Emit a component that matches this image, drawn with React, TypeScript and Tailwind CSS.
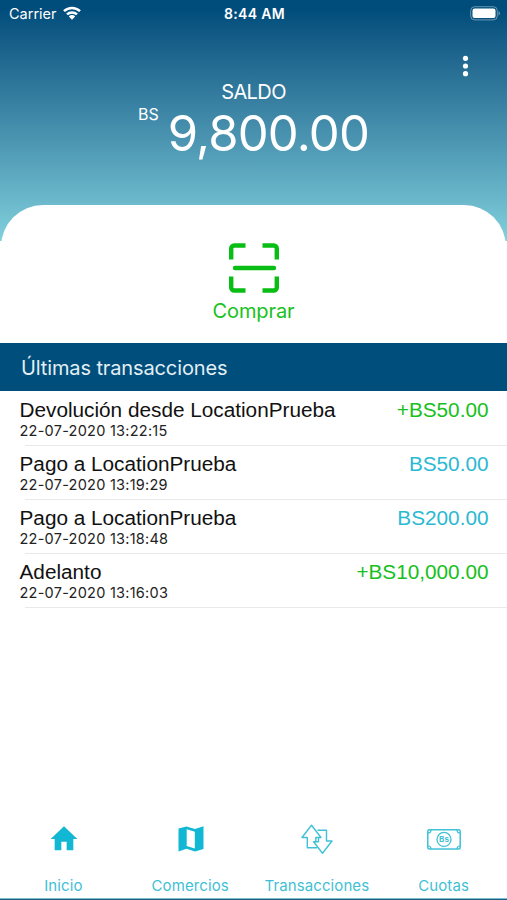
import { MdHome } from 'react-icons/md';

const transactions = [
  { title: 'Devolución desde LocationPrueba', date: '22-07-2020 13:22:15', amount: '+BS50.00', credit: true },
  { title: 'Pago a LocationPrueba', date: '22-07-2020 13:19:29', amount: 'BS50.00', credit: false },
  { title: 'Pago a LocationPrueba', date: '22-07-2020 13:18:48', amount: 'BS200.00', credit: false },
  { title: 'Adelanto', date: '22-07-2020 13:16:03', amount: '+BS10,000.00', credit: true },
];

function ScanIcon() {
  return (
    <svg width="50" height="50" viewBox="0 0 50 50" fill="none" stroke="#08bd13" strokeWidth="4.4" strokeLinejoin="round">
      <path d="M2.200 16.500V5.500a3 3 0 0 1 3-3H16.500M33.500 2.500h11.300a3 3 0 0 1 3 3V16.500M47.800 33.500v11a3 3 0 0 1-3 3H33.500M16.500 47.500H5.200a3 3 0 0 1-3-3V33.500" />
      <path d="M6 25h39" strokeLinecap="round" />
    </svg>
  );
}

function MapIcon() {
  return (
    <svg width="26" height="26" viewBox="0 0 26 26" fill="currentColor" fillRule="evenodd">
      <path d="M0.500 2.500 8.500 0.500 17 3 25.500 0.200V23L17 25.500 8.500 22.800 0.500 25.500zM8.700 3.300V20L16.800 22.500V5.800z" />
    </svg>
  );
}

function TransferIcon() {
  return (
    <svg width="32" height="30" viewBox="0 0 32 30" fill="none" stroke="#3fc1d6" strokeWidth="1.4" strokeLinejoin="round">
      <path d="M16 23.800H6.300V13.500H1L10.500 1.200 20 13.500H14.800V17.800" />
      <path d="M16.500 6.200h9V17H31L21.500 29.200 12.600 17.800H17.500V13.500" />
    </svg>
  );
}

function BillIcon() {
  return (
    <svg width="34" height="21" viewBox="0 0 34 21" fill="none" stroke="#3fc1d6" strokeWidth="1.5">
      <rect x="0.800" y="0.800" width="32.400" height="19.200" rx="1.500" />
      <path d="M1 4Q4 4 4 1M30 1Q30 4 33 4M33 17Q30 17 30 20M4 20Q4 17 1 17" strokeWidth="1.2" />
      <circle cx="17" cy="10.400" r="7" strokeWidth="1.300" />
      <text x="17" y="13.300" textAnchor="middle" fontSize="8" fontWeight="700" fill="#3fc1d6" stroke="none">Bs</text>
    </svg>
  );
}

const tabs = [
  { label: 'Inicio', icon: <MdHome className="h-[34px] w-8" preserveAspectRatio="none" /> },
  { label: 'Comercios', icon: <MapIcon /> },
  { label: 'Transacciones', icon: <TransferIcon /> },
  { label: 'Cuotas', icon: <BillIcon /> },
];

export default function App() {
  return (
    <div className="flex h-[900px] w-[507px] flex-col overflow-hidden bg-white font-['Inter',sans-serif]">
      {/* Header */}
      <header className="relative h-[241px] shrink-0 bg-linear-to-b from-[#004d7b] from-4% to-[#80d0dc] text-white">
        <div className="grid h-7 grid-cols-3 items-center pl-[9px] pr-[7px]">
          <div className="flex items-center gap-[6px] text-[14.500px]">
            <span>Carrier</span>
            <svg className="-mt-0.5" width="18" height="14" viewBox="0 0 18 14" fill="none" stroke="white" strokeWidth="2.500">
              <path d="M1 5.200a11.500 11.500 0 0 1 16 0M4 8.400a7.200 7.200 0 0 1 10 0" />
              <path d="M5.800 10.400a4.600 4.600 0 0 1 6.400 0L9 13.700z" fill="white" stroke="none" />
            </svg>
          </div>
          <div className="-mt-0.5 text-center text-[14px] font-semibold tracking-[0.3px]">8:44 AM</div>
          <svg className="-mt-0.5 justify-self-end" width="30" height="15" viewBox="0 0 30 15">
            <rect x="0.700" y="0.700" width="26.600" height="13.200" rx="4" fill="none" stroke="white" strokeOpacity="0.400" />
            <rect x="2.500" y="2.500" width="23" height="9.600" rx="2" fill="white" />
            <path d="M28.500 5v4.600q1.500-.7 1.500-2.300T28.500 5" fill="white" fillOpacity="0.400" />
          </svg>
        </div>
        <svg className="absolute right-[38px] top-[55px]" width="7" height="22" viewBox="0 0 7 22" fill="white">
          <circle cx="3.500" cy="3.300" r="2.600" />
          <circle cx="3.500" cy="11" r="2.600" />
          <circle cx="3.500" cy="18.700" r="2.600" />
        </svg>
        <div className="mt-[51px] text-center text-[20px] leading-[26px] tracking-[-0.6px]">SALDO</div>
        <div className="flex items-start justify-center gap-[9px]">
          <span className="text-[16px] leading-[18px]">BS</span>
          <span className="pt-[5px] text-[49px] font-normal leading-[48px] tracking-[-0.8px]">9,800.00</span>
        </div>
      </header>

      {/* Scan action */}
      <div className="relative mx-px -mt-9 flex h-[137.500px] shrink-0 flex-col items-center rounded-t-[42px] bg-white pt-[38px]">
        <ScanIcon />
        <div className="mt-1 text-[20px] leading-7 tracking-[-0.1px] text-[#17c221]">Comprar</div>
      </div>

      <h2 className="flex h-[48.500px] shrink-0 items-center bg-[#004e7b] pl-[21px] pt-0.5 text-[20px] tracking-[-0.12px] text-[#e3eff5]">
        Últimas transacciones
      </h2>

      {/* Transactions */}
      <ul className="flex-1">
        {transactions.map((t) => (
          <li key={t.date} className="h-[54.100px]">
            <div className="flex h-[54px] justify-between pl-[19.500px] pr-[18.500px] pt-[7px] font-['Liberation_Sans',sans-serif] text-[20.750px] leading-6">
              <div>
                <div className="text-[#111]">{t.title}</div>
                <div className="font-['Inter',sans-serif] text-[14.500px] leading-[18px] tracking-[0.25px] text-[#222]">{t.date}</div>
              </div>
              <span className={t.credit ? 'text-[#17bf21]' : 'text-[#2bb9d3]'}>{t.amount}</span>
            </div>
            <div className="ml-[25px] h-px bg-[#e9e9e9]" />
          </li>
        ))}
      </ul>

      {/* Tab bar */}
      <nav className="grid h-[80px] shrink-0 grid-cols-4 text-[#12b8d3]">
        {tabs.map((tab) => (
          <div key={tab.label} className="flex flex-col items-center">
            <div className="flex h-[42px] items-center pl-px">{tab.icon}</div>
            <span className="mt-4 text-[15px] leading-5 tracking-[0.1px] text-[#3fbfd5]">{tab.label}</span>
          </div>
        ))}
      </nav>
      <div className="h-0.5 shrink-0 border-t border-[#7cbcd2] bg-[#1f5f86]" />
    </div>
  );
}
